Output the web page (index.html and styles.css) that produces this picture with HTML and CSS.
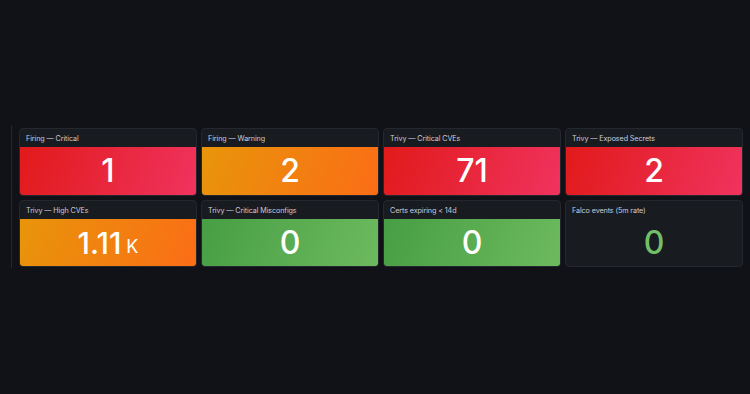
FILE: index.html
```html
<!DOCTYPE html>
<html>
<head>
<meta charset="utf-8">
<link rel="stylesheet" href="styles.css">
</head>
<body>
<div class="dash">
  <div class="rule"></div>
  <div class="grid">
    <div class="panel">
      <div class="title">Firing — Critical</div>
      <div class="value red"><span class="num">1</span></div>
    </div>
    <div class="panel">
      <div class="title">Firing — Warning</div>
      <div class="value orange"><span class="num">2</span></div>
    </div>
    <div class="panel">
      <div class="title">Trivy — Critical CVEs</div>
      <div class="value red"><span class="num">71</span></div>
    </div>
    <div class="panel">
      <div class="title">Trivy — Exposed Secrets</div>
      <div class="value red"><span class="num">2</span></div>
    </div>
    <div class="panel">
      <div class="title">Trivy — High CVEs</div>
      <div class="value orange"><span class="num small">1.11</span><span class="unit">K</span></div>
    </div>
    <div class="panel">
      <div class="title">Trivy — Critical Misconfigs</div>
      <div class="value green"><span class="num">0</span></div>
    </div>
    <div class="panel">
      <div class="title">Certs expiring &lt; 14d</div>
      <div class="value green"><span class="num">0</span></div>
    </div>
    <div class="panel">
      <div class="title">Falco events (5m rate)</div>
      <div class="value plain"><span class="num">0</span></div>
    </div>
  </div>
</div>
</body>
</html>
```
FILE: styles.css
```css
html, body {
  margin: 0;
  padding: 0;
  background: #111217;
  font-family: Inter, "Noto Sans", sans-serif;
  width: 750px;
  height: 394px;
  overflow: hidden;
}
.dash {
  display: flex;
  align-items: flex-start;
  padding: 125px 0 0 11px;
}
.rule {
  width: 1px;
  height: 143px;
  background: #24262d;
}
.grid {
  margin: 3px 0 0 7px;
  width: 724px;
  display: grid;
  grid-template-columns: repeat(4, 1fr);
  grid-template-rows: 68px 67px;
  gap: 4px;
}
.panel {
  background: #181b1f;
  border: 1px solid #24272e;
  border-radius: 4px;
  overflow: hidden;
  display: flex;
  flex-direction: column;
}
.title {
  height: 18px;
  flex: none;
  padding-left: 6px;
  font-size: 7.2px;
  font-weight: 400;
  letter-spacing: -0.1px;
  color: #ccccdc;
  line-height: 19px;
  white-space: nowrap;
}
.value {
  flex: 1;
  display: flex;
  align-items: center;
  justify-content: center;
  color: #fff;
}
.num {
  font-size: 32px;
  font-weight: 500;
  line-height: 1;
}
.num.small {
  font-size: 30px;
}
.unit {
  font-size: 18px;
  font-weight: 400;
  margin-left: 5px;
  margin-top: 8px;
}
.red {
  background: linear-gradient(110deg, #e11a1a 0%, #f0335f 100%);
}
.orange {
  background: linear-gradient(110deg, #e8950a 0%, #fb6d16 100%);
}
.green {
  background: linear-gradient(110deg, #479e44 0%, #6dba5e 100%);
}
.plain {
  color: #73bf69;
}
```
